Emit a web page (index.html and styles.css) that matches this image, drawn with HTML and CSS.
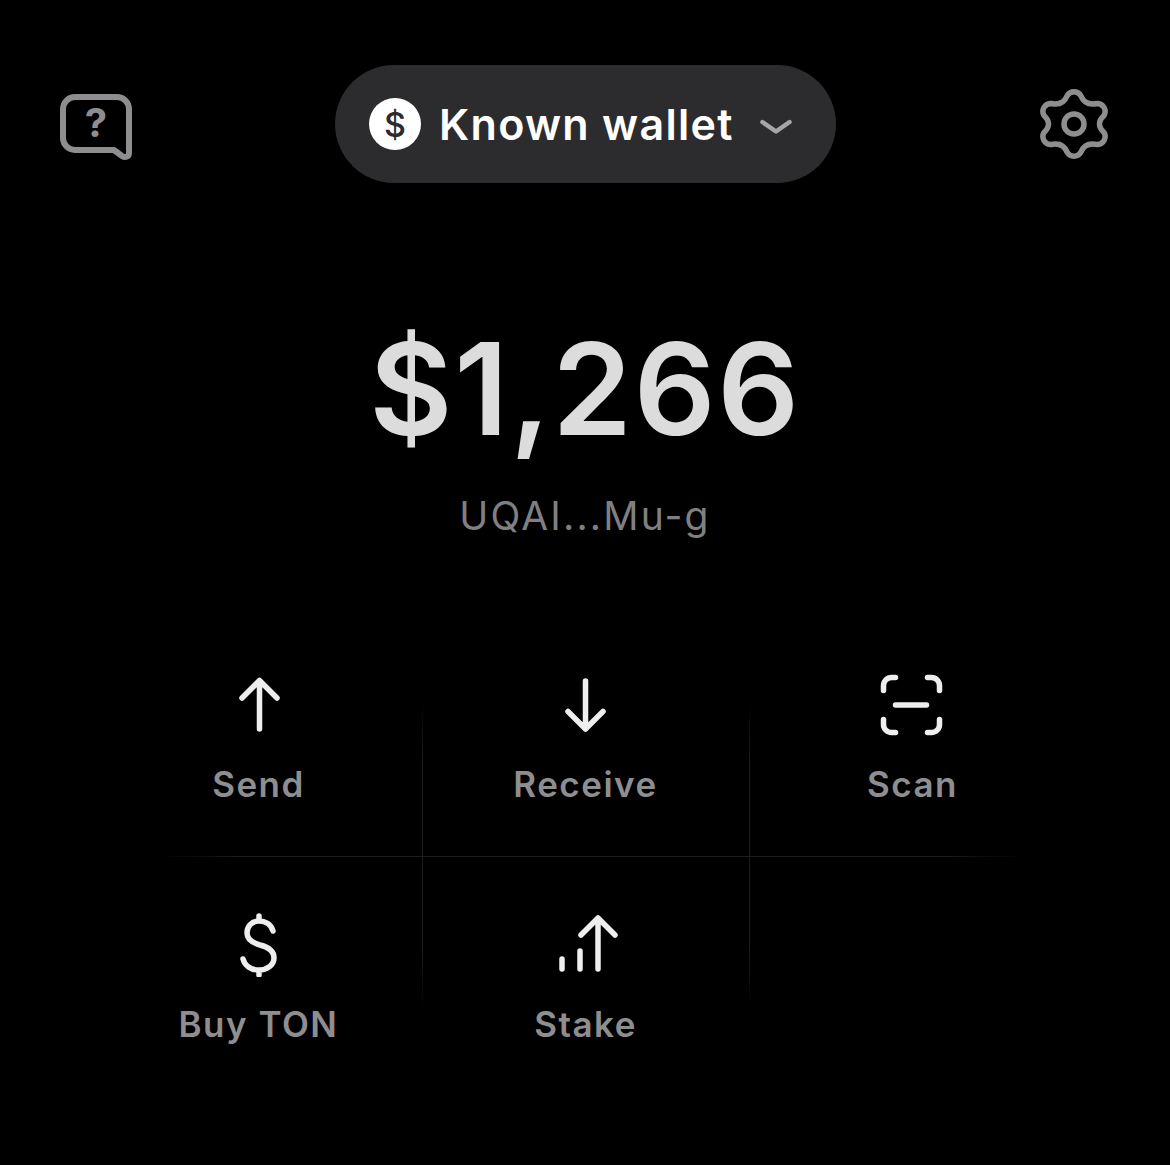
FILE: index.html
```html
<!DOCTYPE html>
<html lang="en">
<head>
    <meta charset="UTF-8">
    <meta name="viewport" content="width=device-width, initial-scale=1.0">
    <title>Known wallet</title>
    <link rel="stylesheet" href="styles.css">
</head>
<body>
    <header class="top-bar">
        <svg class="help-icon" width="72" height="78" viewBox="0 0 72 78" fill="none">
            <path d="M15 12H57A12 12 0 0 1 69 24V68C69 72 65 73 62 71L54 65H15A12 12 0 0 1 3 53V24A12 12 0 0 1 15 12Z" stroke="#8e8e90" stroke-width="6" stroke-linejoin="round"/>
            <text x="36" y="52" text-anchor="middle" class="help-mark">?</text>
        </svg>
        <button class="wallet-pill">
            <span class="coin">$</span>
            <span class="wallet-name">Known wallet</span>
            <svg class="chevron" width="32" height="16" viewBox="0 0 32 16" fill="none">
                <path d="M2.5 3L16 12.5L29.5 3" stroke="#a5a5a7" stroke-width="4.5" stroke-linecap="round" stroke-linejoin="round"/>
            </svg>
        </button>
        <svg class="gear-icon" width="70" height="70" viewBox="-35 -35 70 70" fill="none">
            <path d="M-7 -28A8 8 0 0 1 7 -28Q11 -18 23 -20.5A8 8 0 0 1 30 -8.5Q21 0 30 8.5A8 8 0 0 1 23 20.5Q11 18 7 28A8 8 0 0 1 -7 28Q-11 18 -23 20.5A8 8 0 0 1 -30 8.5Q-21 0 -30 -8.5A8 8 0 0 1 -23 -20.5Q-11 -18 -7 -28Z" stroke="#8e8e90" stroke-width="5.5" stroke-linejoin="round"/>
            <circle r="10" stroke="#8e8e90" stroke-width="5.5"/>
        </svg>
    </header>

    <section class="balance">
        <h1 class="balance-amount">$1,266</h1>
        <p class="balance-address">UQAI...Mu-g</p>
    </section>

    <nav class="actions">
        <a class="action" href="#">
            <svg class="action-icon" width="72" height="64" viewBox="0 0 72 64">
                <path d="M36.5 56V7.5M19 25L36.5 7.5L54 25"/>
            </svg>
            <span class="action-label">Send</span>
        </a>
        <a class="action" href="#">
            <svg class="action-icon" width="72" height="64" viewBox="0 0 72 64">
                <path d="M35.5 8V56M18 38.5L35.5 56L53 38.5"/>
            </svg>
            <span class="action-label">Receive</span>
        </a>
        <a class="action" href="#">
            <svg class="action-icon" width="72" height="64" viewBox="0 0 72 64">
                <path d="M18.5 4.5H14.5A8 8 0 0 0 6.5 12.5V17.5M50.5 4.5H54.5A8 8 0 0 1 62.5 12.5V17.5M18.5 59.5H14.5A8 8 0 0 1 6.5 51.5V46.5M50.5 59.5H54.5A8 8 0 0 0 62.5 51.5V46.5M18.5 32H49.5"/>
            </svg>
            <span class="action-label">Scan</span>
        </a>
        <a class="action" href="#">
            <svg class="action-icon" width="72" height="64" viewBox="0 0 72 64">
                <path d="M50 18C48 11 42 8 36 8C28 8 24 14 24 20C24 27 30 30 37 32C45 34 51 38 51 45C51 52 44 57 36 57C28 57 22 53 20 46M36 3V8M36 57V62"/>
            </svg>
            <span class="action-label">Buy TON</span>
        </a>
        <a class="action" href="#">
            <svg class="action-icon" width="72" height="64" viewBox="0 0 72 64">
                <path d="M12 46V56M30 38V56M48 56V5M31 22L48 5L65 22"/>
            </svg>
            <span class="action-label">Stake</span>
        </a>
    </nav>
</body>
</html>
```

FILE: styles.css
```css
:root {
    --muted: #8e8e90;
    --pill: #2c2c2f;
    --rule: #1d1d1d;
}

* {
    margin: 0;
    padding: 0;
    box-sizing: border-box;
}

body {
    background: #000000;
    color: #ffffff;
    font-family: 'Inter', 'Liberation Sans', sans-serif;
    min-height: 100vh;
}

.top-bar {
    display: grid;
    grid-template-columns: 1fr auto 1fr;
    align-items: center;
    padding: 65px 60px 0 61px;
}

.help-icon {
    justify-self: start;
    margin-left: -1px;
}

.gear-icon {
    justify-self: end;
    margin-right: 1px;
}

.help-mark {
    fill: var(--muted);
    font-family: 'Inter', sans-serif;
    font-size: 40px;
    font-weight: 700;
}

.wallet-pill {
    display: flex;
    align-items: center;
    gap: 18px;
    width: 501px;
    height: 118px;
    padding: 0 44px 0 34px;
    border: none;
    border-radius: 59px;
    background: var(--pill);
    color: #ffffff;
    font-family: inherit;
}

.coin {
    display: grid;
    place-items: center;
    width: 52px;
    height: 52px;
    border-radius: 50%;
    background: #ffffff;
    color: var(--pill);
    font-size: 34px;
    font-weight: 500;
}

.wallet-name {
    font-size: 43px;
    font-weight: 600;
    letter-spacing: 1.3px;
}

.chevron {
    margin: 5px 0 0 auto;
}

.balance {
    margin-top: 131px;
    text-align: center;
}

.balance-amount {
    color: #dcdcdc;
    font-size: 128px;
    font-weight: 600;
    line-height: 150px;
    letter-spacing: 1.6px;
}

.balance-address {
    margin-top: 27px;
    color: #808082;
    font-size: 39px;
    line-height: 50px;
    letter-spacing: 2.2px;
}

.actions {
    display: grid;
    grid-template-columns: repeat(3, 327px);
    grid-auto-rows: 240px;
    width: 981px;
    height: 480px;
    margin: 74px 0 0 95px;
    background-image:
        linear-gradient(to bottom, transparent, var(--rule) 20%, var(--rule) 80%, transparent),
        linear-gradient(to bottom, transparent, var(--rule) 20%, var(--rule) 80%, transparent),
        linear-gradient(to right, transparent, var(--rule) 10%, var(--rule) 90%, transparent);
    background-repeat: no-repeat;
    background-size: 1px 310px, 1px 310px, 865px 1px;
    background-position: 327px 85px, 654px 85px, 65px 241px;
}

.action {
    display: flex;
    flex-direction: column;
    align-items: center;
    padding-top: 58px;
    color: var(--muted);
    text-decoration: none;
}

.action-icon {
    fill: none;
    stroke: #eeeeee;
    stroke-width: 5.5;
    stroke-linecap: round;
    stroke-linejoin: round;
}

.action-label {
    margin-top: 26px;
    font-size: 35px;
    font-weight: 600;
    line-height: 42px;
    letter-spacing: 1.5px;
}
```
